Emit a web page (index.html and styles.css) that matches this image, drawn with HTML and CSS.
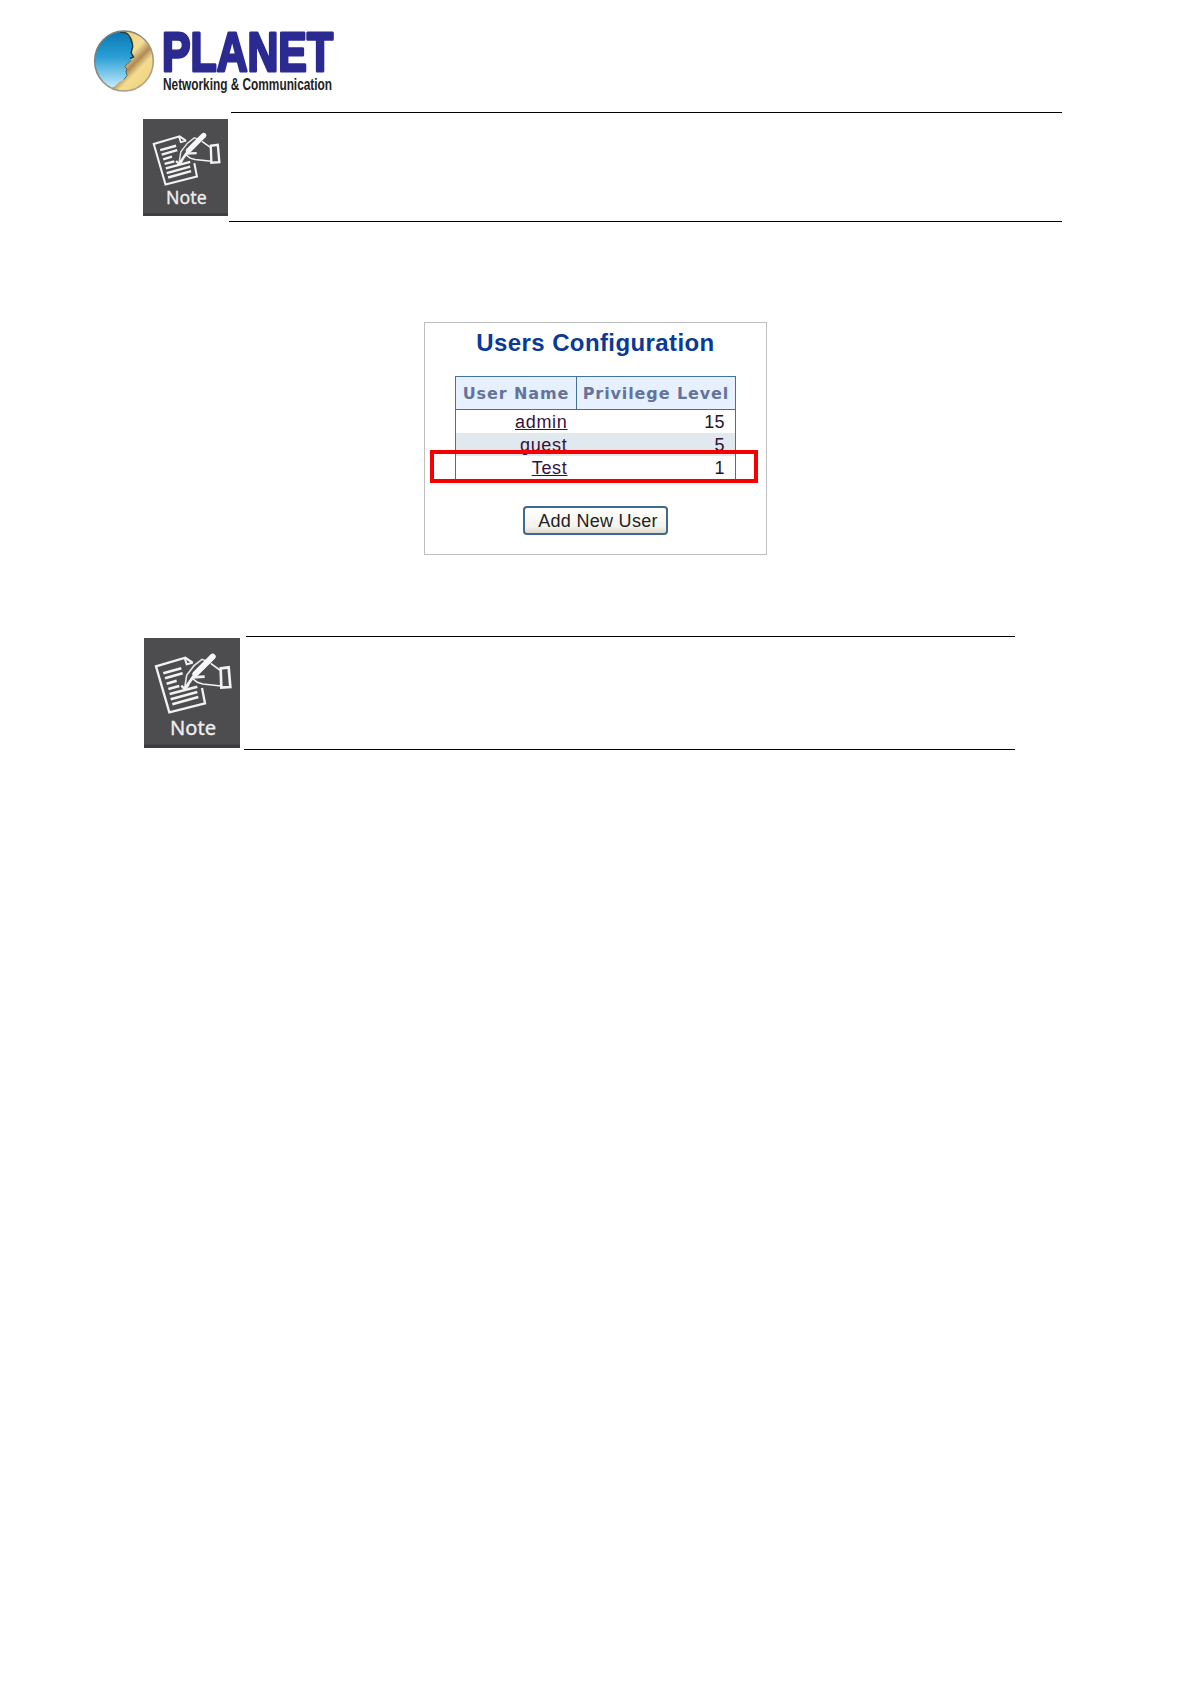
FILE: index.html
```html
<!DOCTYPE html>
<html lang="en">
<head>
<meta charset="UTF-8">
<meta name="viewport" content="width=device-width, initial-scale=1.0">
<title>Users Configuration</title>
<link rel="stylesheet" href="styles.css">
</head>
<body>
<header class="logo">
    <svg width="250" height="68" viewBox="0 0 250 68">
        <defs>
            <linearGradient id="sky" x1="0" y1="0" x2="0" y2="1">
                <stop offset="0" stop-color="#0878b4"/>
                <stop offset="0.45" stop-color="#2b9fd6"/>
                <stop offset="1" stop-color="#c5ecfb"/>
            </linearGradient>
            <linearGradient id="gold" x1="0" y1="0" x2="1" y2="1">
                <stop offset="0.3" stop-color="#efd27a"/>
                <stop offset="0.5" stop-color="#f5df96"/>
                <stop offset="0.61" stop-color="#b08a55"/>
                <stop offset="0.7" stop-color="#f3dc8e"/>
                <stop offset="0.85" stop-color="#f0d684"/>
                <stop offset="1" stop-color="#c9a860"/>
            </linearGradient>
            <linearGradient id="rim" x1="0" y1="0" x2="1" y2="1">
                <stop offset="0" stop-color="#6f7470"/>
                <stop offset="1" stop-color="#b9ad8c"/>
            </linearGradient>
        </defs>
        <g transform="translate(0 0.5)">
            <ellipse cx="31" cy="32.500" rx="29.300" ry="30" fill="url(#gold)"/>
            <path d="M24 3.500 C31 2 38 8 39.500 16 C40.500 20 37.500 22 38.500 25 L40 28 L37 30 L38.500 32 L36 34 C34 36 32 37 31.500 38 L34 40 L32.500 42.500 L34 45 C35 50 30 51 26 54 C23 57 21 59 18 59.500 C8 54 2 44 2 33 C2 18 11 6 24 3.500 Z" fill="url(#sky)"/>
            <path d="M27 3.500 C34 3 38 8 39.500 16 C40.500 20 37.500 22 38.500 25 L40.500 28.500 L37 30" fill="none" stroke="#1c3d44" stroke-width="1.500"/>
            <path d="M38 32 L34 36 L31.500 38 L34 40.500 L33 43 L34 47 L31 51" fill="none" stroke="#5a6a62" stroke-width="1"/>
            <ellipse cx="31" cy="32.500" rx="29.300" ry="30" fill="none" stroke="url(#rim)" stroke-width="1.600"/>
        </g>
        <text class="brand" x="69" y="43.200" textLength="171" lengthAdjust="spacingAndGlyphs">PLANET</text>
        <text class="tagline" x="70" y="62" textLength="169" lengthAdjust="spacingAndGlyphs">Networking &amp; Communication</text>
    </svg>
</header>

<section class="note note-top">
    <svg class="note-icon" viewBox="0 0 288 330">
        <g id="noteDrawing">
            <path d="M146 74 L124 59 L36 85 L76 223 L183 196 L174 150" fill="none" stroke="#f2f2f2" stroke-width="7"/>
            <path d="M122 60 L128 79 L146 74" fill="none" stroke="#f2f2f2" stroke-width="6"/>
            <path d="M58 106 L112 91 M63 121 L116 106 M68 137 L98 128 M73 153 L106 144 M77 168 L160 146 M80 184 L160 162 M85 199 L163 177" fill="none" stroke="#f2f2f2" stroke-width="8"/>
            <path d="M212 54 L144 122 L122 150 L128 112 L150 83 L174 64 L190 70" fill="#4d4d4f" stroke="#e4e4e4" stroke-width="5"/>
            <path d="M200 76 L226 95 L232 97 M232 144 L176 138 L160 133 L146 122" fill="none" stroke="#f2f2f2" stroke-width="5"/>
            <path d="M206 56 L154 108" fill="none" stroke="#f7f7f7" stroke-width="18" stroke-linecap="round"/>
            <path d="M152 110 L126 148 L146 118 L182 116" fill="none" stroke="#f2f2f2" stroke-width="8"/>
            <path d="M112 143 L122 153 L134 140" fill="none" stroke="#f2f2f2" stroke-width="7"/>
            <path d="M230 91 L254 88 L259 147 L232 149 Z" fill="none" stroke="#f2f2f2" stroke-width="8"/>
            <text class="note-label" x="78" y="290" textLength="138" lengthAdjust="spacingAndGlyphs">Note</text>
            <path d="M0 325 H288" stroke="#3c3c3e" stroke-width="9"/>
        </g>
    </svg>
    <div class="note-text"></div>
</section>

<main class="panel">
    <h1>Users Configuration</h1>
    <div class="users">
        <table>
            <thead>
                <tr><th>User Name</th><th>Privilege Level</th></tr>
            </thead>
            <tbody>
                <tr><td><a href="#">admin</a></td><td>15</td></tr>
                <tr class="odd"><td><a href="#">guest</a></td><td>5</td></tr>
                <tr><td><a href="#">Test</a></td><td>1</td></tr>
            </tbody>
        </table>
        <div class="highlight"></div>
    </div>
    <button type="button">Add New User</button>
</main>

<section class="note note-bottom">
    <svg class="note-icon" viewBox="0 0 288 330">
        <use href="#noteDrawing"/>
    </svg>
    <div class="note-text"></div>
</section>
</body>
</html>
```

FILE: styles.css
```css
* {
    box-sizing: border-box;
}
body {
    margin: 0;
    padding-top: 28px;
    background-color: #fff;
    color: #000;
    font-family: "Liberation Sans", Arial, sans-serif;
}
.logo {
    height: 84px;
    padding-left: 93px;
}
.logo svg {
    display: block;
    overflow: visible;
}
.brand {
    font-size: 56px;
    font-weight: bold;
    fill: #2b2a91;
    stroke: #2b2a91;
    stroke-width: 3px;
    stroke-linejoin: round;
}
.tagline {
    font-size: 16px;
    font-weight: bold;
    fill: #222;
}

/* Note boxes */
.note {
    display: flex;
}
.note-icon {
    flex: none;
    background-color: #4d4d4f;
}
.note-label {
    font-family: "Noto Sans", "Open Sans", sans-serif;
    font-size: 59px;
    fill: #eee;
    stroke: #eee;
    stroke-width: 1px;
}
.note-text {
    position: relative;
    border-bottom: 1px solid #000;
}
.note-text::before {
    content: "";
    position: absolute;
    top: 0;
    left: 2px;
    right: 0;
    border-top: 1px solid #000;
}
.note-top {
    height: 110px;
    margin-left: 143px;
}
.note-top .note-icon {
    width: 85px;
    height: 97px;
    margin: 7px 1px 0 0;
}
.note-top .note-text {
    width: 833px;
}
.note-bottom {
    height: 114px;
    margin: 81px 0 0 144px;
}
.note-bottom .note-icon {
    width: 96px;
    height: 110px;
    margin: 2px 4px 0 0;
}
.note-bottom .note-text {
    width: 771px;
}

/* Users panel */
.panel {
    width: 343px;
    height: 233px;
    margin: 100px 0 0 424px;
    border: 1px solid #bfbfbf;
    display: flex;
    flex-direction: column;
    align-items: center;
}
h1 {
    margin: 6px 0 0;
    font-size: 24px;
    line-height: 28px;
    letter-spacing: 0.4px;
    color: #0a3a95;
}
.users {
    position: relative;
    margin-top: 19px;
}
table {
    width: 281px;
    table-layout: fixed;
    border-collapse: collapse;
    border: 1px solid #41719f;
}
th {
    width: 159px;
    height: 33px;
    padding: 1px 0 0;
    border: 1px solid #41719f;
    background-color: #e6f0fe;
    color: #64739a;
    font-family: "DejaVu Sans", Verdana, sans-serif;
    font-size: 16px;
    letter-spacing: 0.9px;
    white-space: nowrap;
}
th:first-child {
    width: 121px;
}
td {
    height: 23px;
    padding: 1px 10px 0 0;
    font-size: 18px;
    line-height: 22px;
    letter-spacing: 0.4px;
    text-align: right;
    color: #24152f;
}
td:first-child {
    padding-right: 9px;
    letter-spacing: 0.7px;
}
td a {
    color: #35123f;
}
.odd {
    background-color: #e1e8ee;
}
.highlight {
    position: absolute;
    left: -25px;
    top: 74px;
    width: 328px;
    height: 33px;
    border: 4px solid #f40000;
}
button {
    width: 145px;
    height: 29px;
    margin-top: 26px;
    padding: 1px 0 0 5px;
    border: 2px solid #41698c;
    border-radius: 4px;
    background: linear-gradient(#fff, #f3f2ec 75%, #dedace);
    color: #222;
    font-family: inherit;
    font-size: 18px;
    letter-spacing: 0.3px;
    white-space: nowrap;
}
```
